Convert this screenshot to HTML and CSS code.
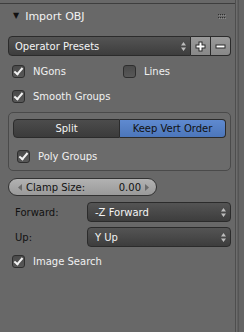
FILE: index.html
```html
<!DOCTYPE html>
<html>
<head>
<title>Import OBJ</title>
<meta name="viewport" content="width=device-width, initial-scale=1">
<link rel="stylesheet" href="styles.css">
</head>
<body>
<div class="region">
  <div class="panel">
    <div class="panel-header">
      <span class="arrow">&#9660;</span>
      <span class="title">Import OBJ</span>
      <svg class="grip" width="8" height="5" viewBox="0 0 8 5">
        <g fill="#2e2e2e">
          <rect x="0" y="0" width="1" height="1"/><rect x="2" y="0" width="1" height="1"/><rect x="4" y="0" width="1" height="1"/><rect x="6" y="0" width="1" height="1"/>
          <rect x="0" y="3" width="1" height="1"/><rect x="2" y="3" width="1" height="1"/><rect x="4" y="3" width="1" height="1"/><rect x="6" y="3" width="1" height="1"/>
        </g>
        <g fill="#8a8a8a">
          <rect x="1" y="1" width="1" height="1"/><rect x="3" y="1" width="1" height="1"/><rect x="5" y="1" width="1" height="1"/><rect x="7" y="1" width="1" height="1"/>
          <rect x="1" y="4" width="1" height="1"/><rect x="3" y="4" width="1" height="1"/><rect x="5" y="4" width="1" height="1"/><rect x="7" y="4" width="1" height="1"/>
        </g>
      </svg>
    </div>

    <div class="presets">
      <div class="menu presets-menu">
        <span>Operator Presets</span>
        <svg class="updown" width="5" height="9" viewBox="0 0 5 9"><path d="M0 3.5 L2.5 0 L5 3.5Z M0 5.5 L2.5 9 L5 5.5Z" fill="#bdbdbd"/></svg>
      </div>
      <div class="tool-btn">
        <svg width="13" height="13" viewBox="0 0 13 13"><path d="M6.5 1.5 V11.5 M1.5 6.5 H11.5" stroke="#2a2a2a" stroke-width="4"/><path d="M6.5 2.5 V10.5 M2.5 6.5 H10.5" stroke="#fff" stroke-width="2"/></svg>
      </div>
      <div class="tool-btn last">
        <svg width="13" height="13" viewBox="0 0 13 13"><path d="M1.5 6.5 H11.5" stroke="#2a2a2a" stroke-width="4"/><path d="M2.5 6.5 H10.5" stroke="#fff" stroke-width="2"/></svg>
      </div>
    </div>

    <div class="row check-row">
      <label class="check-item half"><span class="check on"></span>NGons</label>
      <label class="check-item"><span class="check"></span>Lines</label>
    </div>
    <div class="row check-row">
      <label class="check-item"><span class="check on"></span>Smooth Groups</label>
    </div>

    <div class="box">
      <div class="toggle">
        <div class="toggle-opt">Split</div>
        <div class="toggle-opt active">Keep Vert Order</div>
      </div>
      <div class="row check-row inner">
        <label class="check-item"><span class="check on"></span>Poly Groups</label>
      </div>
    </div>

    <div class="number">
      <svg class="num-arrow" width="4" height="7" viewBox="0 0 4 7"><path d="M4 0 L0 3.5 L4 7Z" fill="#6a6a6a"/></svg>
      <span class="num-label">Clamp Size:</span>
      <span class="num-value">0.00</span>
      <svg class="num-arrow" width="4" height="7" viewBox="0 0 4 7"><path d="M0 0 L4 3.5 L0 7Z" fill="#6a6a6a"/></svg>
    </div>

    <div class="row prop-row forward">
      <span class="prop-label">Forward:</span>
      <div class="menu prop-menu">
        <span>-Z Forward</span>
        <svg class="updown" width="5" height="9" viewBox="0 0 5 9"><path d="M0 3.5 L2.5 0 L5 3.5Z M0 5.5 L2.5 9 L5 5.5Z" fill="#bdbdbd"/></svg>
      </div>
    </div>
    <div class="row prop-row up">
      <span class="prop-label">Up:</span>
      <div class="menu prop-menu">
        <span>Y Up</span>
        <svg class="updown" width="5" height="9" viewBox="0 0 5 9"><path d="M0 3.5 L2.5 0 L5 3.5Z M0 5.5 L2.5 9 L5 5.5Z" fill="#bdbdbd"/></svg>
      </div>
    </div>

    <div class="row check-row last-check">
      <label class="check-item"><span class="check on"></span>Image Search</label>
    </div>
  </div>
  <div class="scroll-edge">
    <div class="scroll-thumb"></div>
  </div>
</div>
</body>
</html>
```

FILE: styles.css
```css
html, body { margin: 0; padding: 0; }
body { background-color: #686868; font-family: "DejaVu Sans", sans-serif; font-size: 10px; color: #f0f0f0; width: 244px; height: 332px; overflow: hidden; }
.region { display: flex; height: 332px; }
.panel { width: 235px; border-right: 1px solid #4e4e4e; }
.scroll-edge { flex: 1; display: flex; justify-content: flex-end; background-color: #5f5f5f; border-left: 1px solid #6c6c6c; }
.scroll-thumb { width: 5px; border-left: 1px solid #555; background-color: #646464; }

.panel-header { margin-top: 3px; border-top: 1px solid #3e3e3e; height: 24px; display: flex; align-items: center; padding-left: 13px; padding-right: 9px; color: #f2f2f2; font-size: 11px; }
.arrow { font-size: 8px; color: #111; margin-right: 6px; margin-top: -1px; }
.title { flex: 1; }
.grip { display: block; }

.presets { display: flex; margin: 8px 0 0 8px; width: 223px; height: 20px; }
.menu { display: flex; align-items: center; justify-content: space-between; box-sizing: border-box; background: linear-gradient(#545454, #3d3d3d); border: 1px solid #2b2b2b; color: #f4f4f4; }
.presets-menu { flex: 1; border-radius: 4px 0 0 4px; padding: 0 4px 0 6px; }
.updown { display: block; }
.tool-btn { width: 20px; box-sizing: border-box; display: flex; align-items: center; justify-content: center; background: linear-gradient(#9a9a9a, #888); border: 1px solid #2b2b2b; border-left: none; }
.tool-btn.last { border-radius: 0 4px 4px 0; }

.row { display: flex; align-items: center; }
.check-row { height: 20px; margin-top: 5px; padding-left: 12px; }
.check-item { display: flex; align-items: center; }
.check-item.half { width: 111px; }
.check { width: 13px; height: 13px; box-sizing: border-box; margin-right: 8px; border: 1px solid #2e2e2e; border-radius: 3px; background: linear-gradient(#4a4a4a, #585858); position: relative; }
.check.on::after { content: ""; position: absolute; left: 3px; top: 0px; width: 3px; height: 7px; border: solid #f2f2f2; border-width: 0 2px 2px 0; transform: rotate(40deg); }

.box { margin: 6px 0 0 8px; width: 223px; height: 59px; box-sizing: border-box; border: 1px solid #4a4a4a; border-radius: 5px; background-color: #6b6b6b; padding: 6px 4px 0 4px; }
.toggle { display: flex; height: 19px; }
.toggle-opt { flex: 1; box-sizing: border-box; display: flex; align-items: center; justify-content: center; border: 1px solid #2b2b2b; background: linear-gradient(#4c4c4c, #3b3b3b); color: #f4f4f4; border-radius: 4px 0 0 4px; }
.toggle-opt.active { background: linear-gradient(#5f8ad0, #4c76ba); color: #111; border-left: none; border-radius: 0 4px 4px 0; }
.check-row.inner { margin-top: 8px; padding-left: 4px; }

.number { margin: 7px 0 0 8px; width: 149px; height: 18px; box-sizing: border-box; border: 1px solid #333; border-radius: 9px; background: linear-gradient(#b2b2b2, #9a9a9a); display: flex; align-items: center; padding: 0 7px 0 9px; color: #111; }
.num-arrow { display: block; }
.num-label { flex: 1; margin-left: 4px; }
.num-value { margin-right: 4px; }

.prop-row { padding-left: 15px; padding-right: 4px; color: #111; }
.prop-row.forward { margin-top: 6px; height: 20px; }
.prop-row.up { margin-top: 5px; height: 20px; }
.prop-label { width: 72px; }
.prop-menu { flex: 1; height: 100%; border-radius: 4px; padding: 0 4px 0 7px; }

.last-check { margin-top: 4px; }
```
